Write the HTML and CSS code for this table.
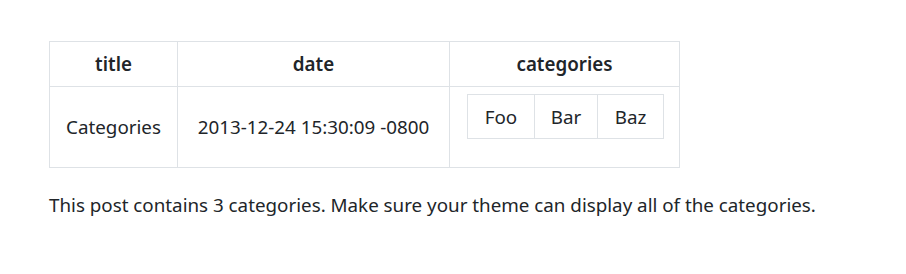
FILE: index.html
```html
<!DOCTYPE html>
<html lang="en">
<head>
<meta charset="utf-8">
<title>Categories</title>
<link rel="stylesheet" href="styles.css">
</head>
<body>
<main class="page">
  <table class="data">
    <colgroup>
      <col class="c-title">
      <col class="c-date">
      <col class="c-cats">
    </colgroup>
    <thead>
      <tr><th>title</th><th>date</th><th>categories</th></tr>
    </thead>
    <tbody>
      <tr>
        <td>Categories</td>
        <td>2013-12-24 15:30:09 -0800</td>
        <td class="cats-cell">
          <table class="nested">
            <colgroup>
              <col class="n1"><col class="n2"><col class="n3">
            </colgroup>
            <tbody>
              <tr><td>Foo</td><td>Bar</td><td>Baz</td></tr>
            </tbody>
          </table>
        </td>
      </tr>
    </tbody>
  </table>
  <p class="note">This post contains 3 categories. Make sure your theme can display all of the categories.</p>
</main>
</body>
</html>
```

FILE: styles.css
```css
html, body {
  margin: 0;
  padding: 0;
  background: #ffffff;
}
body {
  font-family: "Noto Sans", "Open Sans", sans-serif;
  font-size: 18.8px;
  line-height: 27px;
  color: #212529;
}
.page {
  padding: 41px 49px 0 49px;
}
.data {
  border-collapse: collapse;
  table-layout: fixed;
  width: 630px;
  margin: 0 0 24px 0;
}
.c-title { width: 128px; }
.c-date { width: 272px; }
.c-cats { width: 230px; }
.data th,
.data td {
  border: 1px solid #dee2e6;
  text-align: center;
  vertical-align: middle;
  padding: 9px 0 8px 0;
  white-space: nowrap;
}
.data th {
  font-weight: 600;
}
.data td.cats-cell {
  padding: 7px 16px 28px 17px;
  vertical-align: top;
}
.nested {
  border-collapse: collapse;
  table-layout: fixed;
  width: 196px;
  margin: 0;
}
.n1 { width: 67px; }
.n2 { width: 63px; }
.n3 { width: 66px; }
.nested td {
  border: 1px solid #dee2e6;
  padding: 9px 0 7px 0;
  text-align: center;
}
.note {
  margin: 0;
}
```
